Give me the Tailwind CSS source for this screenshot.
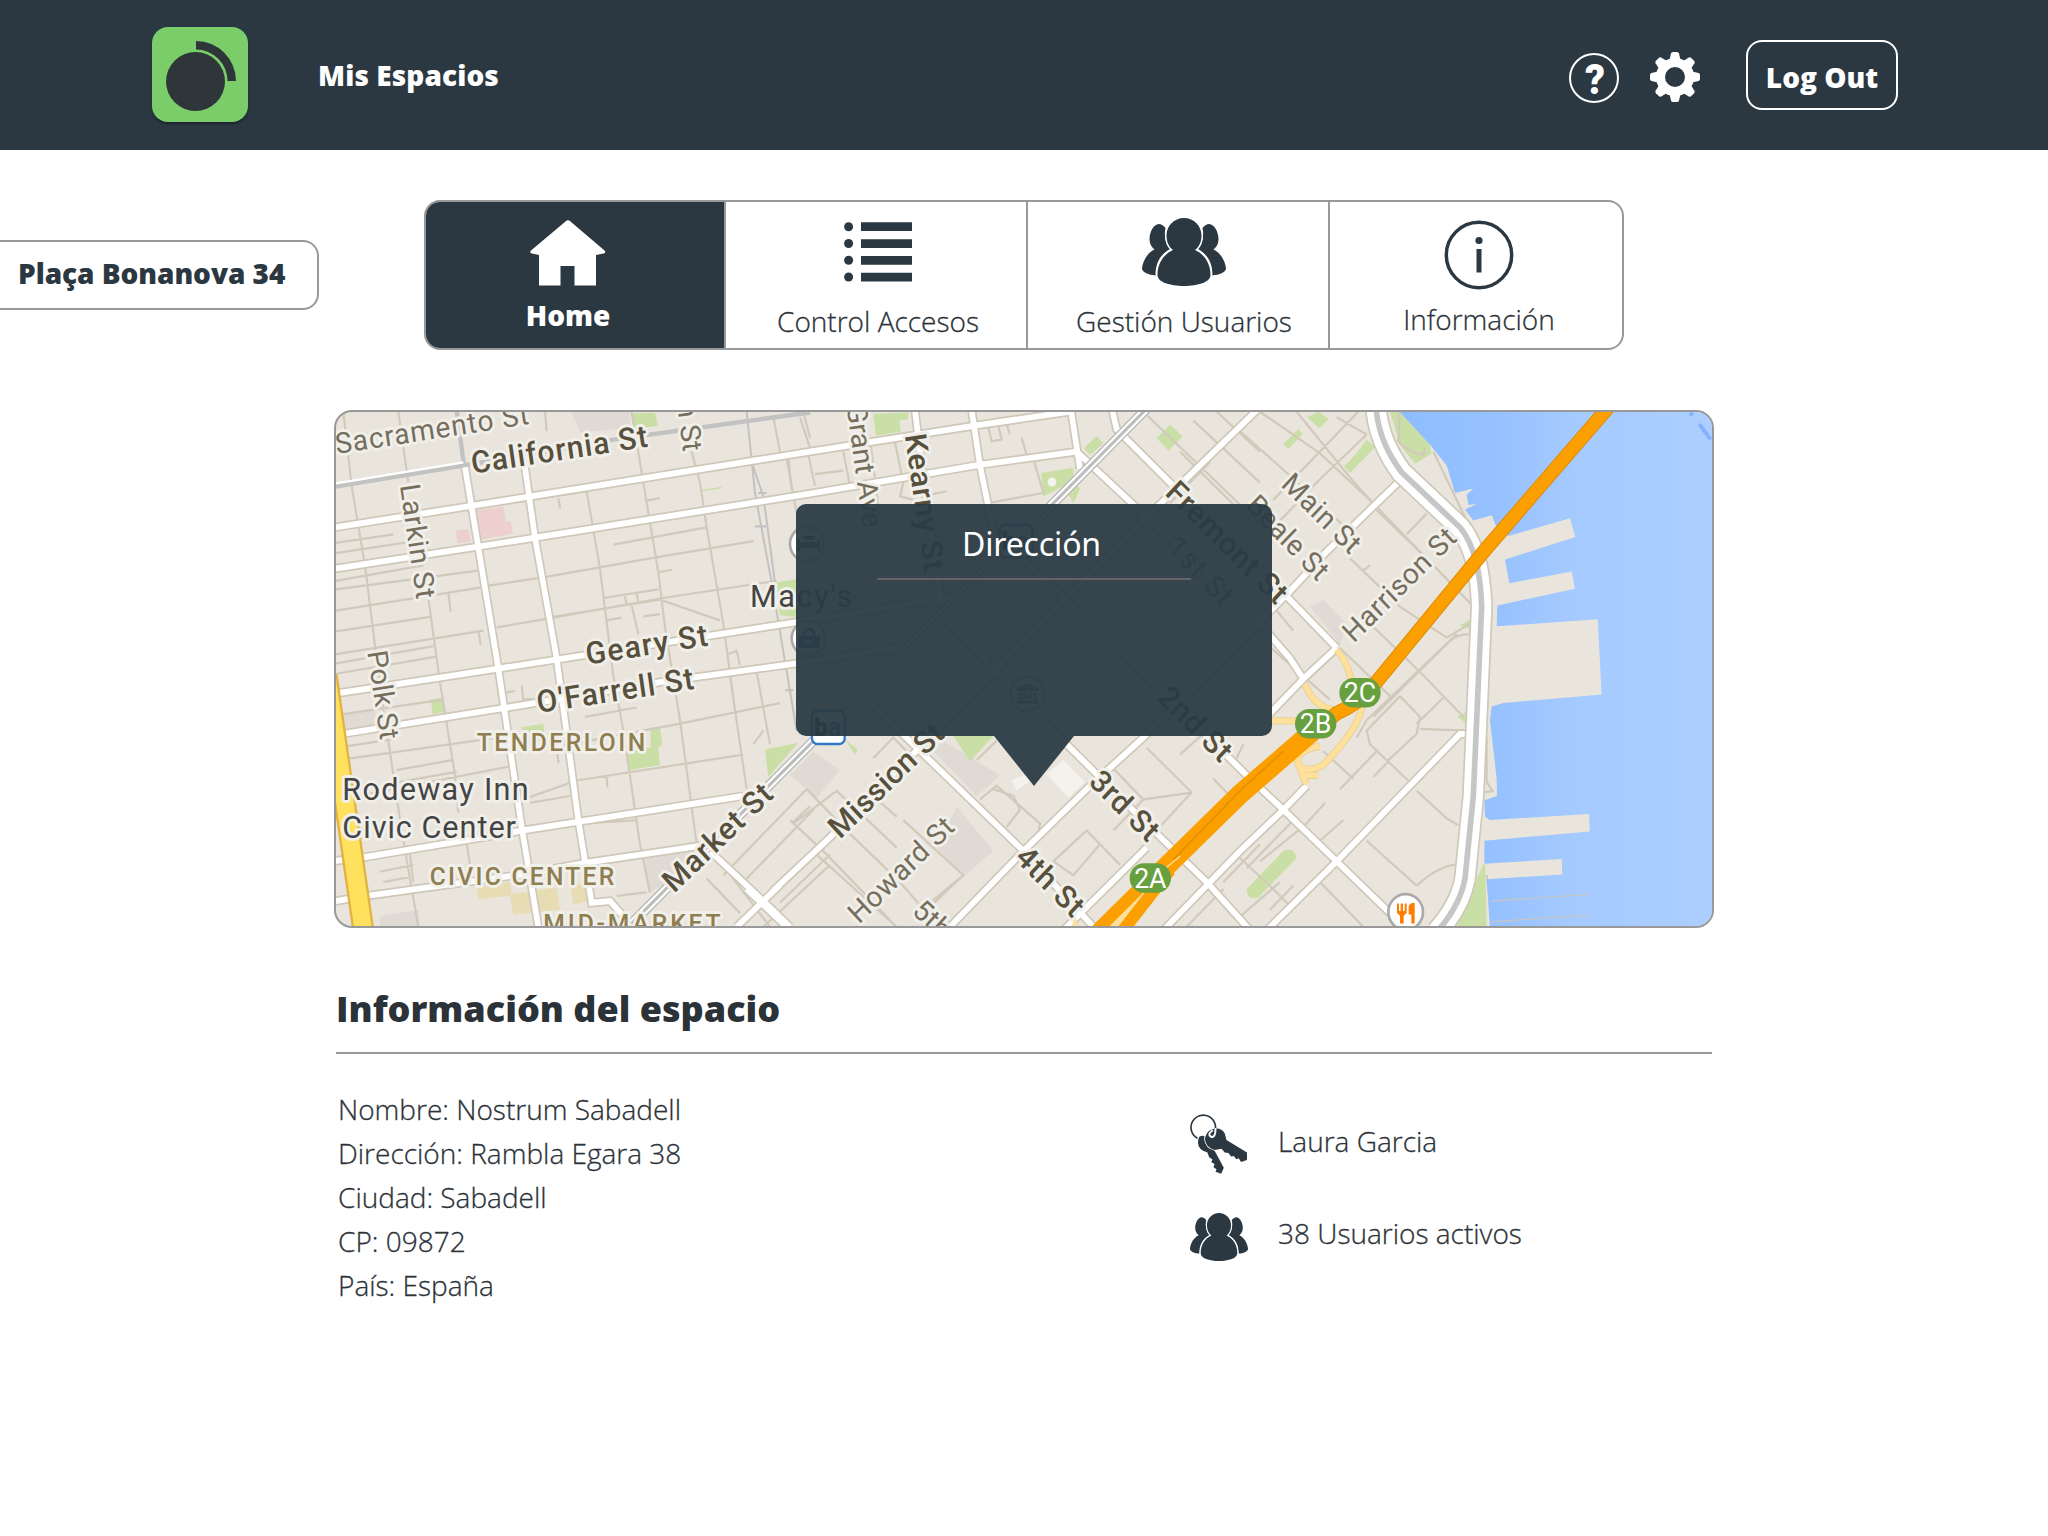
<!DOCTYPE html>
<html lang="es">
<head>
<meta charset="utf-8">
<title>Mis Espacios</title>
<script src="https://cdn.jsdelivr.net/npm/@tailwindcss/browser@4"></script>
</head>
<body class="bg-white font-['Open_Sans',sans-serif] text-[#2b3238] w-[2048px] h-[1536px] overflow-hidden">

<header class="h-[150px] bg-[#2b3842] flex items-start text-white">
  <div class="ml-[152px] mt-[27px] w-24 h-[95px] shrink-0 rounded-2xl bg-[#7acd69] shadow-[0_2px_2px_rgba(0,0,0,0.35)]">
    <svg class="size-24" viewBox="0 0 96 96" fill="#2e363a"><circle cx="43.500" cy="54.500" r="29.500"/><path d="M44 14a40 40 0 0 1 40 40h-8.500a31.500 31.500 0 0 0-31.500-31.500z"/></svg>
  </div>
  <h1 class="ml-[70px] mt-[54px] text-[28px] leading-[42px] font-extrabold whitespace-nowrap w-[1251px] tracking-[0.1px]">Mis Espacios</h1>
  <svg class="mt-[53px] size-[50px] shrink-0" viewBox="0 0 50 50"><circle cx="25" cy="25" r="24" fill="none" stroke="#fff" stroke-width="2"/><text x="16" y="41" textLength="20" lengthAdjust="spacingAndGlyphs" font-family="Roboto, sans-serif" font-weight="900" font-size="43" fill="#fff">?</text></svg>
  <svg class="ml-[31px] mt-[52px] size-[50px] shrink-0" viewBox="-25 -25 50 50" fill="#fff">
    <circle r="14.500" fill="none" stroke="#fff" stroke-width="9"/>
    <g id="teeth"><path id="tooth" d="M-5.500-17L-4-23.500Q-3.500-25-2-25H2Q3.500-25 4-23.500L5.500-17z"/><use href="#tooth" transform="rotate(45)"/><use href="#tooth" transform="rotate(90)"/><use href="#tooth" transform="rotate(135)"/></g>
    <use href="#teeth" transform="rotate(180)"/>
  </svg>
  <button class="ml-[46px] mt-10 w-[152px] h-[70px] shrink-0 rounded-2xl border-2 border-white text-[28px] font-extrabold whitespace-nowrap pt-1">Log Out</button>
</header>

<div class="flex items-start">
  <div class="mt-[90px] w-[319px] h-[70px] border-2 border-l-0 border-[#999] rounded-r-2xl pl-[18px] text-[28px] leading-[62px] font-extrabold text-[#2b3842] whitespace-nowrap tracking-[-0.05px]">Plaça Bonanova 34</div>
  <nav class="ml-[105px] mt-[50px] w-[1200px] h-[150px] border-2 border-[#999] rounded-2xl overflow-hidden flex text-[28px] leading-10 font-light whitespace-nowrap">
    <a class="w-[300px] border-r-2 border-[#999] bg-[#2b3842] text-white font-extrabold flex flex-col items-center pr-[14px] pt-[18px]">
      <svg class="w-[76px] h-[66px]" viewBox="0 0 76 66" fill="#fff"><path d="M35.500 1.500q2.500-2.500 5 0L74.500 30.500q2 2.500-1 3L66 35v30.500H44.500V46h-14v19.500H9V35l-7-1.500q-3-.5-1-3z"/></svg>
      <span class="mt-[9px]">Home</span>
    </a>
    <a class="w-[302px] border-r-2 border-[#999] flex flex-col items-center pl-1 pt-5">
      <svg class="w-[68px] h-[60px]" viewBox="0 0 68 60" fill="#2b3842"><path d="M17 .3h51v8.700H17zM17 17.200h51v8.700H17zM17 34h51v8.700H17zM17 50.700h51v8.700H17z"/><circle cx="4.600" cy="4.700" r="4.500"/><circle cx="4.600" cy="21.500" r="4.500"/><circle cx="4.600" cy="38.300" r="4.500"/><circle cx="4.600" cy="55" r="4.500"/></svg>
      <span class="mt-[19px] [-webkit-text-stroke:0.3px]">Control Accesos</span>
    </a>
    <a class="w-[302px] border-r-2 border-[#999] flex flex-col items-center pl-3 pt-4">
      <svg class="w-[84px] h-[68px]" viewBox="-42 0 84 68" fill="#2b3842">
        <g id="users"><path id="user-side" d="M18.500 10C27-.5 34.500 12 34.500 21c0 5-2 8-5 10.500C37 35 41 43 42 50c.5 4-6 7-13.500 7.500C28.500 45 24 37 14 31c5-6 6-14 4.500-21z"/><use href="#user-side" transform="scale(-1 1)"/><path d="M0 0C10 0 17.500 8 17.500 17.500 17.500 24 15 29 11 32 20 36 26.500 45 26.500 57 26.500 64 14 68 0 68S-26.500 64-26.500 57C-26.500 45-20 36-11 32-15 29-17.500 24-17.500 17.500-17.500 8-10 0 0 0z" stroke="#fff" stroke-width="3" paint-order="stroke"/></g>
      </svg>
      <span class="mt-[15px] [-webkit-text-stroke:0.3px]">Gestión Usuarios</span>
    </a>
    <a class="flex-1 flex flex-col items-center pl-[6px] pt-[18px]">
      <svg class="size-[70px]" viewBox="0 0 70 70" fill="#2b3842"><circle cx="35" cy="35" r="32.700" fill="none" stroke="#2b3842" stroke-width="3.500"/><circle cx="35" cy="20.500" r="3.600"/><path d="M32.500 29h5v23.500h-5z"/></svg>
      <span class="mt-[9px] [-webkit-text-stroke:0.3px]">Información</span>
    </a>
  </nav>
</div>

<main class="ml-[334px] mt-[60px] w-[1380px]">
  <section class="relative h-[518px]">
    <div class="size-full border-2 border-[#999] rounded-[18px] overflow-hidden bg-[#e9e5dc]">
      <svg class="size-full block" viewBox="18 34.800 4128 1492.700" preserveAspectRatio="none" fill="none" font-family="Roboto, sans-serif">
        <defs>
          <linearGradient id="sea" x1="0" x2="1" y1="0" y2="0"><stop offset="0" stop-color="#8ebdff"/><stop offset=".3" stop-color="#96c1ff"/><stop offset=".55" stop-color="#a5caff"/><stop offset="1" stop-color="#accfff"/></linearGradient>
          <g id="streets">
            <path d="M0 372L420 308 1440 150 1930 75 2220 34M0 492L445 426 1440 272 1950 188 2240 150M0 855L505 780 1400 645 1880 570M35 970L520 895 1000 818 1400 765 1750 712M0 1340L90 1330 580 1250 1240 1150M0 1458L110 1440 560 1380 780 1342 1110 1295M405 195L445 428 505 780 575 1240 625 1530M585 195L615 400 680 750 745 1220 785 1460 840 1455 890 1510M1140 1310L1300 1455 1380 1530M1220 1530L1300 1455 1350 1408"/>
            <path transform="translate(1350)" d="M-20 1425L150 1270 480 950 860 570 1100 340 1430 30M-100 1420L30 1540M510 1530L730 1310 920 1130 1090 980 1300 780 1530 555 1640 440 1870 225M260 870L400 1000 720 1300 950 1540M500 640L860 1000 1110 1240 1280 1400 1410 1540M740 470L1150 850 1400 1090 1510 1190 1670 1340 1830 1490M997 30L1010 85 1170 240 1480 530 1670 720M890 150L1100 340 1440 650 1530 750 1570 810M1670 720L1570 810 1470 910M850 1540L1100 1300M1580 1120L1510 1190 1380 1310 1150 1540M2060 970H2040L1890 1120 1670 1340 1460 1540M405 30L430 230 480 560 500 640M575 30L600 190 640 380M873 30L900 200"/>
          </g>
          <path id="market" d="M905 1520L1440 1000 2180 290 2450 25"/>
          <path id="embarcadero" d="M3138 20Q3145 120 3215 210L3390 370Q3450 440 3455 600L3430 1150 3405 1390Q3390 1470 3320 1545"/>
          <path id="freeway" d="M3845 10L3470 430 3130 830Q3090 880 3020 910L2730 1140 2490 1370"/>
          <path id="ramps" d="M3020 725Q3060 770 3065 830M2925 825Q2950 890 3010 900M2825 932H2910M3095 890Q3090 950 2980 1060 2930 1085 2905 1060 2890 1020 2970 1005M2900 1030Q2910 1080 2930 1115M2925 1090H2965"/>
        </defs>

        <!-- blocks, parks and special areas -->
        <g fill="#dfdad4"><path d="M725 34H900V80L750 95zM18 915L130 895 150 940 18 960zM945 1330L1110 1300 1020 1400 955 1430zM150 1500L265 1480 270 1530H150zM1380 1090L1450 1020 1530 1075 1460 1155zM1840 990L2010 1090 1940 1150 1810 1020zM1880 1180L1990 1310 1900 1385 1820 1300zM2940 600L2980 580 3050 650 3030 710z"/></g>
        <g fill="#edd0ce"><path d="M440 320L520 310 527 352 543 352 548 388 455 405zM377 380L415 375 422 412 382 417z"/></g>
        <g fill="#e8dcb5"><path d="M440 1415L540 1400 545 1435 680 1415 690 1480 550 1495 540 1440 445 1450zM722 1410L770 1400 775 1455 730 1465z"/></g>
        <g fill="#cadfa5">
          <path d="M903 38H975L985 75 910 85zM302 870L340 865 344 905 308 912zM575 950L640 940 645 985 585 1005zM893 1020L962 1010V950H990L997 1000 985 1010 990 1060 897 1075zM1305 1015L1405 995 1315 1095zM1340 530L1400 520V630L1350 625zM1115 261L1175 252V256L1115 266z"/>
          <path transform="translate(1350)" d="M280 40L385 36V55L358 60 362 92 288 104zM1130 110L1170 72 1208 105 1165 147zM912 140L950 105 970 125 930 160zM783 212L880 197 880 225 900 260 880 300 850 250 790 280zM520 976H640L570 1050zM195 985L233 1015 225 1030z"/>
          <path transform="translate(2730)" d="M202 50L235 34 267 55 237 82zM130 128L175 85 188 98 145 143zM312 193L345 160 380 115 405 137 330 212zM450 34H480L570 130 575 155 525 185 480 130zM660 655L695 635V665zM652 920L680 905V940zM20 1420L130 1310Q160 1295 170 1330L55 1445Q20 1455 20 1420zM705 1400L735 1340 740 1530H650z"/>
        </g>
        <path fill="#f3f2ed" d="M2150 1085L2200 1045 2265 1110 2215 1155zM2045 1105L2090 1085 2110 1100 2060 1135z"/>
        <circle cx="2166" cy="238" r="13" fill="#f3f2ed"/>

        <!-- minor streets -->
        <g stroke="#d1cabc" stroke-width="6.500">
          <path d="M40 34L65 250 105 480 150 830 215 1250 265 1530M205 34L235 240M290 540L330 820 375 1090 385 1200M240 1320L250 1400M410 1290L420 1350M645 34L650 90M770 265L810 490 850 800 880 960 930 1290 960 1430M905 34L940 240 985 500 1005 660 1050 930 1100 1290M1085 150L1110 240 1130 370 1180 650 1215 900 1250 1130M1330 50L1350 150 1370 170 1400 330M1410 50L1440 140M18 415L190 390M18 445L290 405M18 550L450 495M18 525L280 480M18 612L450 545M18 672L300 630M18 738L460 670M18 765L310 715M18 795L320 745M18 915L340 870M18 1010L190 985M30 1045L540 975M200 1075L370 1045M200 1110L380 1080M30 1160L560 1060M150 1370L250 1350M160 1400L240 1385M250 1430L400 1410M470 540L640 515 960 460 1270 410M500 660L670 632 1000 575 1340 525M470 310L770 265M670 630L890 595 990 580 1170 640M820 575L985 550M905 597L925 680M885 570L890 595M920 560L925 590M830 640L875 632M940 628L990 622M985 500L1025 493M945 293L990 285M850 420L1130 370M765 920L920 893M720 1000L1050 940 1350 880M550 1170L740 1105 1240 1030M600 1170L720 1150M750 1230L920 1220M780 1340L1100 1290M860 1440L950 1430M355 560L362 615M445 670L452 712M685 285L690 315M830 1090L832 1125M680 1010L686 1055M525 850L555 845M575 830L580 870 605 868M1190 740L1220 728 1230 770M1200 800L1215 900M1280 790L1320 1000M1270 1000L1300 960"/>
          <path d="M1130 1390L1230 1490M1170 1340L1320 1530M1380 1220L1480 1310 1560 1390 1680 1510M1390 1225L1440 1180M1430 1130L1560 1260 1710 1400 1790 1490M1500 1350L1300 1530M1430 1130L1180 1380M1450 1190L1230 1410M1750 1500L1900 1380M1630 1150L1700 1210M1390 1230L1520 1135 1700 1300M1720 1220L1900 1380 1780 1490M1460 1320L1700 1530M1350 1460L1500 1320"/>
          <path transform="translate(1350)" d="M70 34L90 110M25 165L35 260M85 160L105 250M105 215L190 205M190 150L210 250M270 110L300 350M340 100L370 240 360 280 400 290M625 80L635 120 665 115 655 75M680 70L690 100M725 110L740 160M760 170L790 270 620 300M450 275L500 265M1090 34L1440 360M1200 150L1430 370M1310 34L1440 150M1240 60L1440 240M1290 180L1170 300M280 1040L340 980 400 1040M600 1160L650 1120 780 1230 770 1290M640 1130L700 1150 720 1190 680 1240M590 1045L650 990M820 1340L920 1250 960 1290 880 1380 820 1340M960 1290L1020 1350M990 1060L1090 1160 1235 1140M1090 1160L1000 1250M1235 1140L1100 1010M1235 1140L1110 1270M1200 1030L1280 960M1300 1100L1380 1180M1330 1400L1440 1290M1220 1530L1330 1420M1390 1000L1360 1060"/>
          <path transform="translate(2730)" d="M0 90L150 220 350 400M60 34L240 155 400 300 690 590M170 34L330 225 390 290M380 100L240 230 100 370M355 34L100 290M290 50L380 100M410 320L560 460 700 600M500 390L560 330M330 460L480 600 620 690M370 495L390 480M380 640L540 790 670 920M480 860L540 920 530 970 440 1050M540 955L680 960M480 860L380 960 390 1000 510 1110M610 865L530 940M300 720L450 860M300 1130L410 1020M400 1095L445 1050M530 1135L620 1215 655 1235M380 1280L530 1410M530 1410Q600 1350 650 1350M620 690L690 650M650 680L380 930 350 980M690 680Q650 680 630 700L400 920M250 1020L340 1100M0 1330L100 1420 160 1480M20 1360L160 1220M60 1340L200 1230M160 1410L90 1480M240 1400L370 1530M240 1280L310 1220M190 1240L255 1170M0 1500L120 1400M0 640L140 760 270 870M100 600L160 670M480 34L475 120Q500 150 550 160L555 140M580 150L640 270 700 390M740 980V1110L758 1135 725 1140M740 1380L760 1530"/>
        </g>

        <!-- bay -->
        <path fill="url(#sea)" transform="translate(2730)" d="M475 30L570 130 620 190 645 270 700 257 680 275 685 305 710 302 675 318 700 350 755 335 770 370 805 395 990 343 1006 398 795 463 808 532 995 498 1005 548 772 597 770 657 1073 637 1085 855 790 880 755 890 750 930 770 1100 771 1150 733 1162 735 1210 750 1220 1047 1202 1049 1253 733 1280V1347L965 1333 967 1378 740 1392 750 1535H1430V30z"/>
        <path stroke="#86b1ff" stroke-width="12" d="M4080 38L4088 44M4108 70L4142 115"/>
        <path stroke="#c3c6c9" stroke-width="4" d="M3485 1455L3775 1436M3485 1515L3775 1496"/>

        <!-- rail and tram lines -->
        <g stroke="#c2c2c2"><path stroke-width="13" d="M0 254L400 190 850 115 1440 36M380 30L402 190"/><path stroke-width="6" d="M1250 34L1275 270 1325 530 1400 960M1265 180L1300 280 1335 530M1285 270H1310M1275 367H1308M1365 843H1390"/></g>
        <path stroke="#fff" stroke-width="7" d="M0 245L400 181"/>

        <!-- main streets -->
        <use href="#streets" stroke="#cfc8b9" stroke-width="27"/>
        <use href="#streets" stroke="#fff" stroke-width="17"/>
        <use href="#market" stroke="#b9b9b9" stroke-width="30"/><use href="#market" stroke="#fff" stroke-width="22"/><use href="#market" stroke="#bdbdbd" stroke-width="9"/>
        <use href="#embarcadero" stroke="#cfc8b9" stroke-width="68"/><use href="#embarcadero" stroke="#fff" stroke-width="58"/><use href="#embarcadero" stroke="#c6c6c6" stroke-width="17"/>
        <path stroke="#e2b245" stroke-width="66" d="M-10 800L100 1540"/><path stroke="#ffe15e" stroke-width="52" d="M-10 800L100 1540"/>
        <use href="#ramps" stroke="#e6cf98" stroke-width="21"/><use href="#ramps" stroke="#ffe09a" stroke-width="16"/>
        <use href="#freeway" stroke="#e08c05" stroke-width="42"/><use href="#freeway" stroke="#fc9f00" stroke-width="36"/>
        <path fill="#ffe09a" d="M2460 1400L2500 1400 2390 1535H2320z"/>
        <path stroke="#fc9f00" stroke-width="58" d="M2950 960L2730 1145 2480 1382"/>
        <path stroke="#fc9f00" stroke-width="36" d="M2490 1358L2300 1540M2520 1365L2375 1545"/>
        <path stroke="#e99200" stroke-width="6" d="M2860 1020L2730 1135 2530 1335"/>
        <path stroke="#ffe09a" stroke-width="4" d="M2500 1365L2550 1325"/>
        <path fill="#ffe09a" d="M2225 1530L2235 1495 2245 1530z"/>

        <!-- street and district names -->
        <g stroke="#f1efea" stroke-width="17" stroke-linejoin="round" paint-order="stroke" fill="#57503c" font-size="90" font-weight="500">
          <g fill="#756e5c" font-size="84" font-weight="400">
            <text transform="translate(20 157) rotate(-8.600)" textLength="586">Sacramento St</text>
            <text transform="translate(210 248) rotate(81.500)" textLength="336">Larkin St</text>
            <text transform="translate(112 732) rotate(81.300)" textLength="260">Polk St</text>
            <text transform="translate(1060 152) rotate(82)" text-anchor="end">Mason St</text>
            <text transform="translate(1600 374) rotate(82)" text-anchor="end">Grant Ave</text>
            <text transform="translate(1587 1524) rotate(-43.700)" textLength="403">Howard St</text>
            <text transform="translate(1743 1488) rotate(43)">5th St</text>
            <text transform="translate(2508 430) rotate(46)" textLength="240">1st St</text>
            <text transform="translate(2744 310) rotate(45)" textLength="310">Beale St</text>
            <text transform="translate(2850 248) rotate(44)" textLength="292">Main St</text>
            <text transform="translate(3071 708) rotate(-44)" textLength="435">Harrison St</text>
          </g>
          <text transform="translate(428 214) rotate(-8.500)" textLength="534">California St</text>
          <text transform="translate(1724 102) rotate(81.500)" textLength="402">Kearny St</text>
          <text transform="translate(772 769) rotate(-8.800)" textLength="369">Geary St</text>
          <text transform="translate(625 909) rotate(-8.500)" textLength="475">O'Farrell St</text>
          <text transform="translate(1032 1434) rotate(-43)" textLength="414">Market St</text>
          <text transform="translate(1530 1277) rotate(-43.500)" textLength="437">Mission St</text>
          <text transform="translate(2051 1333) rotate(44.500)" textLength="247">4th St</text>
          <text transform="translate(2273 1113) rotate(44)" textLength="250">3rd St</text>
          <text transform="translate(2478 868) rotate(44.300)" textLength="270">2nd St</text>
          <text transform="translate(2502 273) rotate(44)" textLength="467">Fremont St</text>
          <g fill="#8f7e50" font-size="74" font-weight="500">
            <text x="440" y="1018" textLength="506">TENDERLOIN</text>
            <text x="299" y="1408" textLength="554">CIVIC CENTER</text>
            <text x="640" y="1545" textLength="532">MID-MARKET</text>
          </g>
          <g fill="#444" font-size="92" font-weight="400">
            <text x="1260" y="602" textLength="306">Macy's</text>
            <text x="37" y="1163" textLength="559">Rodeway Inn</text>
            <text x="37" y="1271" textLength="521">Civic Center</text>
          </g>
        </g>

        <!-- markers -->
        <g fill="#fff" stroke="#aaa" stroke-width="8">
          <circle cx="1430" cy="418" r="50"/><circle cx="1435" cy="692" r="50"/><circle cx="2092" cy="853" r="50"/><circle cx="3227" cy="1487" r="52"/>
        </g>
        <path fill="#555" d="M1400 405H1410V412H1462V405H1470V440H1462V430H1410V440H1400zM1420 395H1455V406H1420z"/>
        <path fill="#3c6bb5" d="M1405 685H1470V720H1405z"/><path stroke="#3c6bb5" stroke-width="7" d="M1422 690V675Q1437 655 1452 675V690"/><path stroke="#fff" stroke-width="5" d="M1424 694Q1437 712 1450 694"/>
        <path fill="#777" d="M2058 838L2092 822 2127 838V845H2058zM2065 850H2075V872H2065zM2110 850H2120V872H2110zM2060 874H2125V882H2060z"/><path stroke="#777" stroke-width="6" d="M2082 870V852L2092 864 2102 852V870"/>
        <path fill="#ff7d00" d="M3201 1462h6v22h5v-22h7v22h5v-22h6v28l-9 8v22h-11v-22l-9-8zM3254 1460v60h-10v-26h-8v-24q4-10 18-10z"/>
        <g fill="#fff" stroke="#3178c8" stroke-width="7"><rect x="1446" y="903" width="98" height="96" rx="16"/><rect x="2009" y="363" width="98" height="94" rx="16"/></g>
        <g font-size="74" font-weight="900"><text x="1452" y="976" fill="#222">b<tspan fill="#3178c8">a</tspan></text><text x="2015" y="436" fill="#222">b<tspan fill="#3178c8">a</tspan></text></g>
        <g fill="#67a03e"><rect x="3028" y="807" width="124" height="86" rx="43"/><rect x="2895" y="897" width="124" height="86" rx="43"/><rect x="2399" y="1345" width="124" height="86" rx="43"/></g>
        <g fill="#fff" font-size="80" text-anchor="middle"><text x="3090" y="878">2C</text><text x="2957" y="968">2B</text><text x="2461" y="1416">2A</text></g>
      </svg>
    </div>
    <!-- address callout over the map -->
    <div class="absolute left-[462px] top-[94px] w-[476px] flex flex-col items-center">
      <div class="w-full h-[232px] rounded-[10px] bg-[#2b3b44]/95 flex flex-col items-center pt-[17px]">
        <h2 class="text-[32px] leading-[46px] font-normal text-white pr-[5px] font-['Noto_Sans',sans-serif] tracking-[-0.15px]">Dirección</h2>
        <div class="mt-[11px] w-[314px] h-[2px] bg-[#646464]"></div>
      </div>
      <svg class="w-20 h-[50px]" viewBox="0 0 80 50" fill="#2b3b44" fill-opacity=".95"><path d="M0 0H80L40 50z"/></svg>
    </div>
  </section>

  <section class="mx-[2px]">
    <h2 class="pt-[56px] h-[126px] text-[36px] leading-[50px] font-extrabold border-b-2 border-[#999] text-[#2b3238]">Información del espacio</h2>
    <div class="flex items-start text-[28px] leading-[44px] font-light whitespace-nowrap [-webkit-text-stroke:0.3px]">
      <ul class="w-[854px] pl-[2px] pt-[33px]">
        <li>Nombre: Nostrum Sabadell</li>
        <li>Dirección: Rambla Egara 38</li>
        <li>Ciudad: Sabadell</li>
        <li>CP: 09872</li>
        <li>País: España</li>
      </ul>
      <div class="pt-[57px] flex flex-col gap-8">
        <div class="flex items-center gap-[30px] h-[60px]">
          <svg class="mt-[5px] w-[58px] h-[60px]" viewBox="60 70 175 180" fill="#2b3842">
            <path d="M88 138Q104 128 112 150L135 182 162 232 154 250 137 244 140 236 131 230 134 220 124 214 128 207 118 200 112 185Q84 178 84 155 84 145 88 138z"/>
            <path stroke="#fff" stroke-width="5" paint-order="stroke" d="M118 120Q150 104 165 128L170 148 232 186 232 208 214 214 207 203 200 206 192 196 184 198 176 187 165 186 155 174 135 178Q108 172 105 145 107 130 118 120z"/>
            <circle cx="100" cy="110" r="37" fill="none" stroke="#2b3842" stroke-width="5" stroke-dasharray="185 48" transform="rotate(118 100 110)"/>
            <path fill="none" stroke="#fff" stroke-width="6" stroke-linecap="round" d="M137 115Q137 142 123 138 112 130 127 120"/>
          </svg>
          <span>Laura Garcia</span>
        </div>
        <div class="flex items-center gap-[30px] h-[60px]">
          <svg class="mt-[7px] w-[58px] h-12" viewBox="-42 0 84 68" preserveAspectRatio="none" fill="#2b3842"><use href="#users"/></svg>
          <span>38 Usuarios activos</span>
        </div>
      </div>
    </div>
  </section>
</main>
</body>
</html>
